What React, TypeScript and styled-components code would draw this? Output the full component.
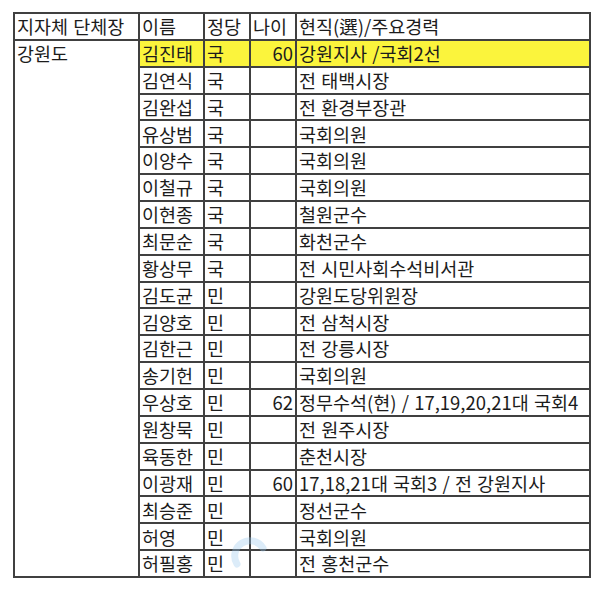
import React from "react";
import styled, { createGlobalStyle } from "styled-components";

const Global = createGlobalStyle`
  html, body { margin: 0; padding: 0; background: #ffffff; }
  body { font-family: "Noto Sans CJK KR", "Noto Sans", sans-serif; color: #1a1a1a; }
`;

const Page = styled.div`
  position: relative;
  width: 600px;
  height: 591px;
  padding: 12px 0 0 13px;
  box-sizing: border-box;
`;

const Table = styled.table`
  border-collapse: collapse;
  table-layout: fixed;
  width: 576px;
  border: 2px solid #404040;
  font-size: 18.5px;
  line-height: 1;
`;

const Col = styled.col<{ $w: number }>`
  width: ${(p) => p.$w}px;
`;

const Row = styled.tr`
  height: 26.86px;
`;

const Cell = styled.td<{ $hl?: boolean; $right?: boolean; $top?: boolean }>`
  border: 2px solid #404040;
  padding: ${(p) => (p.$top ? "3px 2px 0 2px" : "0 2px")};
  vertical-align: ${(p) => (p.$top ? "top" : "middle")};
  text-align: ${(p) => (p.$right ? "right" : "left")};
  background: ${(p) => (p.$hl ? "#fbf43c" : "transparent")};
  white-space: nowrap;
  overflow: hidden;
  word-spacing: 1px;
  color: #1c1c1c;
`;

const Watermark = styled.svg`
  position: absolute;
  left: 229px;
  top: 534px;
  opacity: 0.35;
  pointer-events: none;
`;

type R = { name: string; party: string; age?: string; career: string; hl?: boolean };

const rows: R[] = [
  { name: "김진태", party: "국", age: "60", career: "강원지사 /국회2선", hl: true },
  { name: "김연식", party: "국", career: "전 태백시장" },
  { name: "김완섭", party: "국", career: "전 환경부장관" },
  { name: "유상범", party: "국", career: "국회의원" },
  { name: "이양수", party: "국", career: "국회의원" },
  { name: "이철규", party: "국", career: "국회의원" },
  { name: "이현종", party: "국", career: "철원군수" },
  { name: "최문순", party: "국", career: "화천군수" },
  { name: "황상무", party: "국", career: "전 시민사회수석비서관" },
  { name: "김도균", party: "민", career: "강원도당위원장" },
  { name: "김양호", party: "민", career: "전 삼척시장" },
  { name: "김한근", party: "민", career: "전 강릉시장" },
  { name: "송기헌", party: "민", career: "국회의원" },
  { name: "우상호", party: "민", age: "62", career: "정무수석(현) / 17,19,20,21대 국회4" },
  { name: "원창묵", party: "민", career: "전 원주시장" },
  { name: "육동한", party: "민", career: "춘천시장" },
  { name: "이광재", party: "민", age: "60", career: "17,18,21대 국회3 / 전 강원지사" },
  { name: "최승준", party: "민", career: "정선군수" },
  { name: "허영", party: "민", career: "국회의원" },
  { name: "허필홍", party: "민", career: "전 홍천군수" },
];

export default function App() {
  return (
    <>
      <Global />
      <Page>
        <Table>
          <colgroup>
            <Col $w={125} />
            <Col $w={65} />
            <Col $w={46} />
            <Col $w={46} />
            <Col $w={294} />
          </colgroup>
          <tbody>
            <Row>
              <Cell>지자체 단체장</Cell>
              <Cell>이름</Cell>
              <Cell>정당</Cell>
              <Cell>나이</Cell>
              <Cell>현직(選)/주요경력</Cell>
            </Row>
            {rows.map((r, i) => (
              <Row key={r.name}>
                {i === 0 && (
                  <Cell rowSpan={rows.length} $top>
                    강원도
                  </Cell>
                )}
                <Cell $hl={r.hl}>{r.name}</Cell>
                <Cell $hl={r.hl}>{r.party}</Cell>
                <Cell $hl={r.hl} $right>
                  {r.age ?? ""}
                </Cell>
                <Cell $hl={r.hl}>{r.career}</Cell>
              </Row>
            ))}
          </tbody>
        </Table>
        <Watermark width="40" height="36" viewBox="0 0 40 36">
          <path d="M8 30 A14 14 0 1 1 34 14" fill="none" stroke="#9ccbef" strokeWidth="7" strokeLinecap="round" />
        </Watermark>
      </Page>
    </>
  );
}
